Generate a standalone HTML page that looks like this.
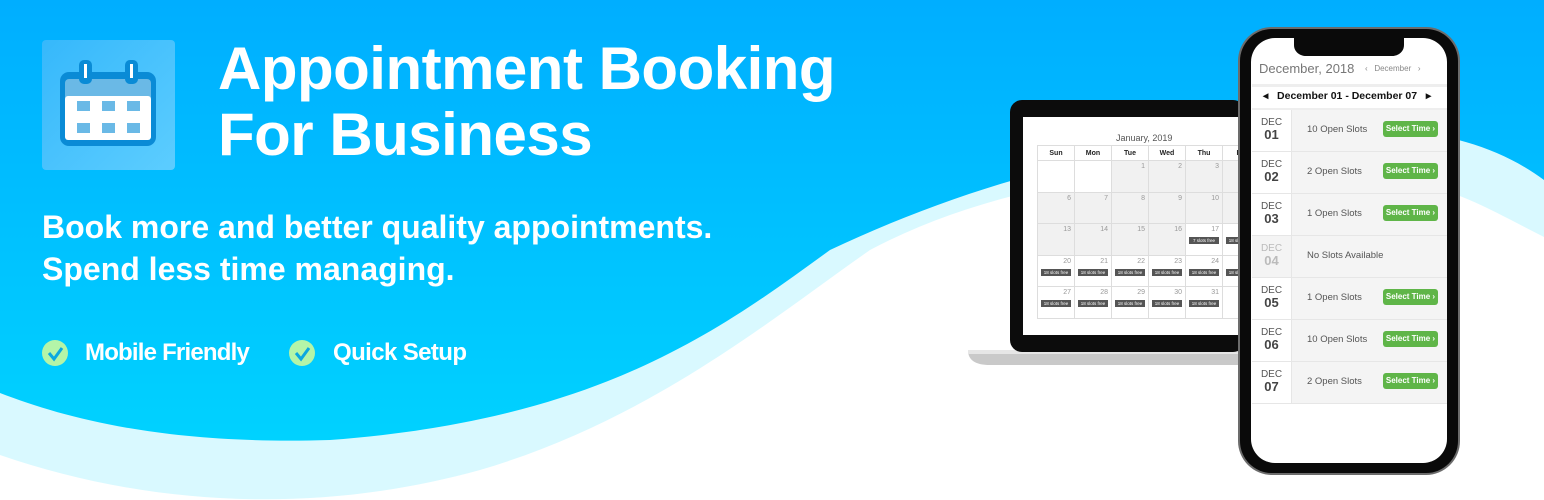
<!DOCTYPE html>
<html><head><meta charset="utf-8"><style>
*{margin:0;padding:0;box-sizing:border-box}
body{width:1544px;height:500px;overflow:hidden;position:relative;font-family:"Liberation Sans",sans-serif;background:#fff}
.abs{position:absolute}
.t{color:#fff;font-weight:bold}
.cal{position:absolute;left:1037px;top:145px;border-collapse:collapse;font-size:7px;color:#999}
.cal td{border:1px solid #ddd;width:38.6px;height:31.5px;vertical-align:top;text-align:right;padding:2px 3px;background:#f1f1f1}
.cal th{height:15px;color:#222;font-size:7px;border:1px solid #ddd;background:#fff}
.cal td.w{background:#fff}
.b{display:block;background:#555;color:#fff;font-size:4.5px;text-align:center;margin-top:4px;padding:1px 0;width:30px}
.row{position:absolute;left:1252px;width:195px;height:42px;border-bottom:1px solid #e6e6e6;background:#f4f4f4}
.row .d{position:absolute;left:0;top:0;width:40px;height:41px;background:#fff;border-right:1px solid #e6e6e6;text-align:center;color:#555;font-size:10px;padding-top:7px;line-height:12px}
.row .d b{font-size:13px;color:#444;display:block}
.row .s{position:absolute;left:55px;top:14px;font-size:9.5px;color:#555}
.row .g{position:absolute;left:131px;top:11px;width:55px;height:16px;background:#5fb548;border-radius:3px;color:#fff;font-size:8px;font-weight:bold;text-align:center;line-height:16px}
</style></head><body>
<svg class="abs" style="left:0;top:0" width="1544" height="500">
<defs><linearGradient id="bg" x1="0" y1="0" x2="0" y2="1"><stop offset="0" stop-color="#00aeff"/><stop offset="1" stop-color="#00d2ff"/></linearGradient>
<linearGradient id="ic" x1="0" y1="0" x2="1" y2="1"><stop offset="0" stop-color="#36b8fb"/><stop offset="1" stop-color="#5ccdff"/></linearGradient></defs>
<rect width="1544" height="500" fill="#fff"/>
<path d="M0,0H1544V237C1500,215 1460,190 1400,178 1240,150 1020,170 870,250 770,320 650,420 480,470 300,520 130,500 0,455Z" fill="#d9f9ff"/>
<path d="M0,0H1544V180C1490,140 1420,125 1330,130 1150,140 1000,170 830,250 720,330 600,420 330,440 170,445 70,420 0,393Z" fill="url(#bg)"/>
<rect x="42" y="40" width="133" height="130" rx="4" fill="url(#ic)"/>
<rect x="60" y="72" width="96" height="74" rx="9" fill="#0a8bd6"/>
<rect x="65" y="79" width="86" height="22" rx="4" fill="#6ab9e6"/>
<rect x="65" y="96" width="86" height="44" rx="3" fill="#fff"/>
<rect x="79" y="60" width="13" height="24" rx="5" fill="#0a8bd6"/><rect x="84" y="64" width="3" height="14" fill="#fff"/>
<rect x="125" y="60" width="13" height="24" rx="5" fill="#0a8bd6"/><rect x="130" y="64" width="3" height="14" fill="#fff"/>
<g fill="#6ab9e6"><rect x="77" y="101" width="13" height="10"/><rect x="102" y="101" width="13" height="10"/><rect x="127" y="101" width="13" height="10"/><rect x="77" y="123" width="13" height="10"/><rect x="102" y="123" width="13" height="10"/><rect x="127" y="123" width="13" height="10"/></g>
<circle cx="55" cy="353" r="13" fill="#b4f5a8"/><path d="M49,353l5,6 8,-11" stroke="#0aa8e0" stroke-width="3" fill="none"/>
<circle cx="302" cy="353" r="13" fill="#b4f5a8"/><path d="M296,353l5,6 8,-11" stroke="#0aa8e0" stroke-width="3" fill="none"/>
<path d="M968,350H1240V365H990C975,365 968,360 968,350Z" fill="#c9c9c9"/>
<rect x="968" y="350" width="272" height="4" fill="#e6e6e6"/>
<rect x="1010" y="100" width="235" height="252" rx="12" fill="#0c0c0c"/>
<rect x="1023" y="117" width="222" height="218" fill="#fff"/>
<rect x="1238" y="27" width="222" height="448" rx="34" fill="#6c6c6c"/>
<rect x="1240" y="29" width="218" height="444" rx="32" fill="#0a0a0a"/>
<rect x="1251" y="38" width="196" height="425" rx="24" fill="#fff"/>
<path d="M1294,38H1404V45C1404,52 1398,56 1392,56H1306C1300,56 1294,52 1294,45Z" fill="#0a0a0a"/>
<rect x="1252" y="84" width="195" height="3" fill="#eee"/>
<rect x="1252" y="108" width="195" height="2" fill="#eee"/>
</svg>
<div class="abs t" style="left:218px;top:36px;font-size:60px;line-height:66px;letter-spacing:-0.5px">Appointment Booking<br>For Business</div>
<div class="abs t" style="left:42px;top:206px;font-size:32px;line-height:42px;letter-spacing:0">Book more and better quality appointments.<br>Spend less time managing.</div>
<div class="abs t" style="left:85px;top:339px;font-size:24px;letter-spacing:-0.8px">Mobile Friendly</div>
<div class="abs t" style="left:333px;top:339px;font-size:24px;letter-spacing:-0.6px">Quick Setup</div>
<div class="abs" style="left:1116px;top:133px;font-size:9px;color:#555">January, 2019</div>
<div class="abs" style="left:1023px;top:117px;width:215px;height:218px;overflow:hidden">
<table class="cal" style="left:14px;top:28px">
<tr><th>Sun</th><th>Mon</th><th>Tue</th><th>Wed</th><th>Thu</th><th>Fri</th></tr>
<tr><td class="w"></td><td class="w"></td><td>1</td><td>2</td><td>3</td><td>4</td></tr>
<tr><td>6</td><td>7</td><td>8</td><td>9</td><td>10</td><td>11</td></tr>
<tr><td>13</td><td>14</td><td>15</td><td>16</td><td class="w">17<span class="b">7 slots free</span></td><td class="w">18<span class="b">18 slots free</span></td></tr>
<tr><td class="w">20<span class="b">18 slots free</span></td><td class="w">21<span class="b">18 slots free</span></td><td class="w">22<span class="b">18 slots free</span></td><td class="w">23<span class="b">18 slots free</span></td><td class="w">24<span class="b">18 slots free</span></td><td class="w">25<span class="b">18 slots free</span></td></tr>
<tr><td class="w">27<span class="b">18 slots free</span></td><td class="w">28<span class="b">18 slots free</span></td><td class="w">29<span class="b">18 slots free</span></td><td class="w">30<span class="b">18 slots free</span></td><td class="w">31<span class="b">18 slots free</span></td><td class="w"></td></tr>
</table></div>
<div class="abs" style="left:1259px;top:61px;font-size:13px;color:#777">December, 2018</div>
<div class="abs" style="left:1365px;top:64px;font-size:8px;color:#888">‹ &nbsp; December &nbsp; ›</div>
<div class="abs" style="left:1263px;top:90px;font-size:10.5px;color:#111;font-weight:bold">◂ &nbsp; December 01 - December 07 &nbsp; ▸</div>
<div class="row" style="top:110px"><div class="d">DEC<b>01</b></div><div class="s">10 Open Slots</div><div class="g">Select Time ›</div></div>
<div class="row" style="top:152px"><div class="d">DEC<b>02</b></div><div class="s">2 Open Slots</div><div class="g">Select Time ›</div></div>
<div class="row" style="top:194px"><div class="d">DEC<b>03</b></div><div class="s">1 Open Slots</div><div class="g">Select Time ›</div></div>
<div class="row" style="top:236px"><div class="d" style="background:#f4f4f4;color:#bbb">DEC<b style="color:#bbb">04</b></div><div class="s">No Slots Available</div></div>
<div class="row" style="top:278px"><div class="d">DEC<b>05</b></div><div class="s">1 Open Slots</div><div class="g">Select Time ›</div></div>
<div class="row" style="top:320px"><div class="d">DEC<b>06</b></div><div class="s">10 Open Slots</div><div class="g">Select Time ›</div></div>
<div class="row" style="top:362px"><div class="d">DEC<b>07</b></div><div class="s">2 Open Slots</div><div class="g">Select Time ›</div></div>
</body></html>
